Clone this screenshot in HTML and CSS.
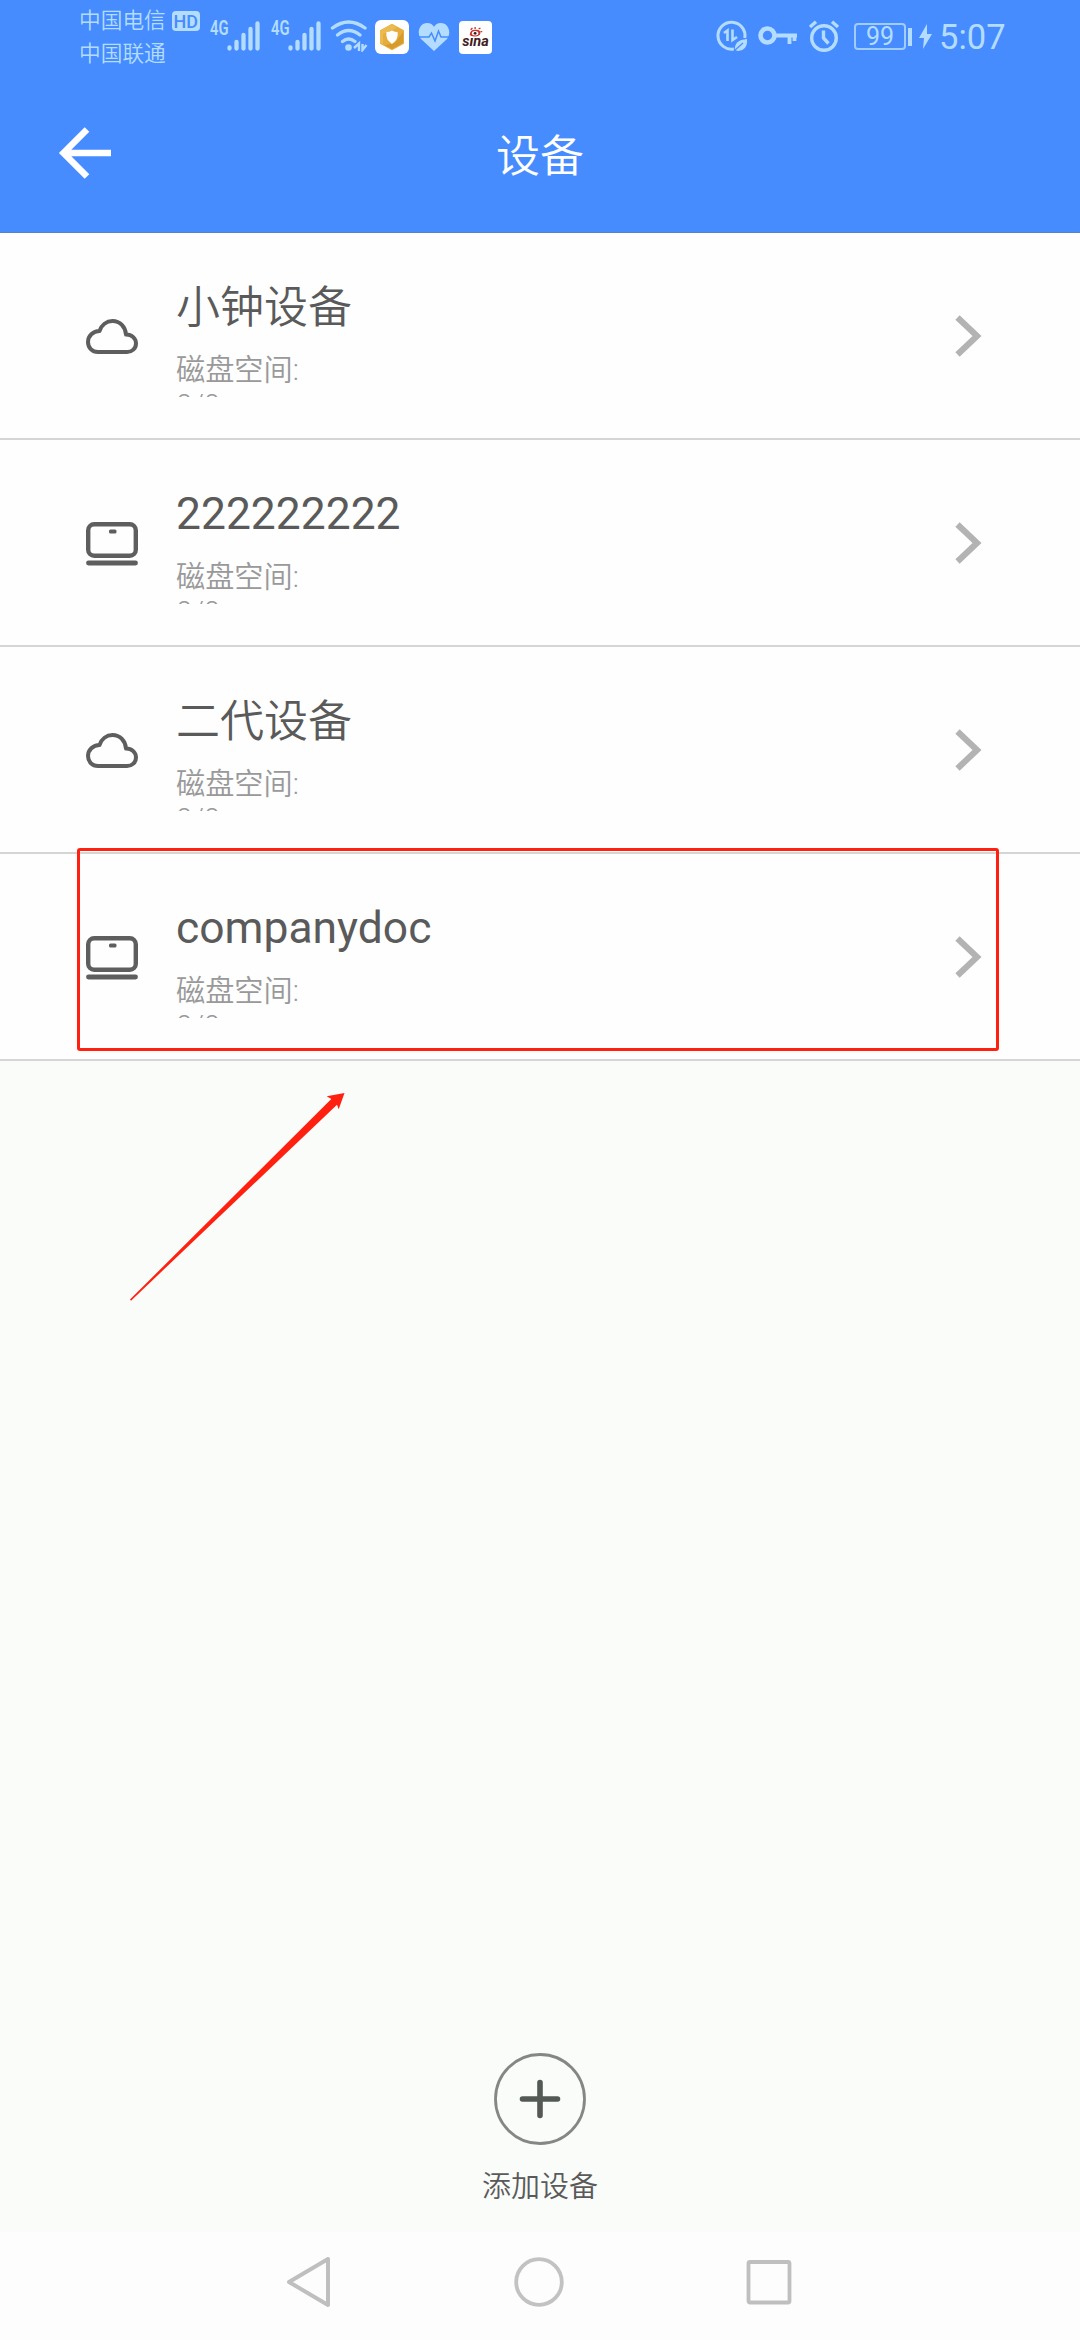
FILE: index.html
```html
<!DOCTYPE html>
<html lang="zh-CN">
<head>
<meta charset="utf-8">
<title>设备</title>
<link rel="stylesheet" href="styles.css">
</head>
<body>
<svg class="defs" width="0" height="0" aria-hidden="true">
  <symbol id="cloud" viewBox="0 0 52 36"><path d="M12 33C6 33 2 28.500 2 23C2 17 7 12 13.500 12C15.500 6 20.500 2 26.500 2C34 2 39.500 8 40 15.500C46 15.500 50 19.500 50 24.500C50 29.500 46 33 41 33Z" fill="none" stroke="#5e5e5e" stroke-width="4" stroke-linejoin="round"/></symbol>
  <symbol id="laptop" viewBox="0 0 52 44"><rect x="2.200" y="2.200" width="47.600" height="31.600" rx="6" fill="none" stroke="#5e5e5e" stroke-width="4.400"/><rect x="23" y="7.500" width="7.500" height="4" rx="1.500" fill="#5e5e5e"/><path d="M2.500 41H49.500" stroke="#5e5e5e" stroke-width="4.800" stroke-linecap="round"/></symbol>
  <symbol id="chevron" viewBox="0 0 28 44"><path d="M3.500 3.500L23 22L3.500 40.500" fill="none" stroke="#b3b3b3" stroke-width="6.200"/></symbol>
  <symbol id="signal" viewBox="0 0 34 32"><path d="M2.500 27.500V28.500M9.500 22V28.500M16.500 15V28.500M23.500 9V28.500M30.500 3.500V28.500" fill="none" stroke="#b3dcff" stroke-width="4.300" stroke-linecap="round"/></symbol>
</svg>

<header class="header">
  <div class="status">
    <div class="carriers">
      <div class="carrier">中国电信<span class="hd">HD</span></div>
      <div class="carrier">中国联通</div>
    </div>
    <div class="net"><span class="gen">4G</span><svg width="34" height="32"><use href="#signal"/></svg></div>
    <div class="net"><span class="gen">4G</span><svg width="34" height="32"><use href="#signal"/></svg></div>
    <svg class="wifi" width="38" height="32" viewBox="0 0 38 32"><g fill="none" stroke="#b3dcff" stroke-width="3.400" stroke-linecap="round"><path d="M2.500 8Q18.500 -4 35 8"/><path d="M7.500 15Q18.500 6 30 15"/><path d="M12.500 21.500Q18.500 16.500 25 21.500"/></g><circle cx="18.500" cy="27.500" r="3.300" fill="#b3dcff"/><path d="M24 28L29 23.500V31M36.500 25L32.500 30V24" fill="none" stroke="#b3dcff" stroke-width="2.400"/></svg>
    <svg class="guard" width="34" height="34" viewBox="0 0 34 34"><rect width="34" height="34" rx="6" fill="#fff"/><path d="M17 5L28 11V23L17 29L6 23V11Z" fill="#e5ad3d" stroke="#e5ad3d" stroke-width="2" stroke-linejoin="round"/><path d="M5 11L17 4L22 8L8 14V24L5 23Z" fill="#ebbb50"/><path d="M28 12V23L17 29L10 25L20 23Z" fill="#d69a2d"/><path d="M17 10.500Q20 12 22.500 12Q24 19 17 24Q10 19 11.500 12Q14 12 17 10.500Z" fill="#fff"/></svg>
    <svg class="heart" width="32" height="30" viewBox="0 0 32 30"><path d="M16 29L3 17C-2 10 2 1 9 1C13 1 15 3 16 5C17 3 19 1 23 1C30 1 34 10 29 17Z" fill="#b3dcff"/><path d="M0 15H11L13.500 11L17 19L20.500 9L23 15H32" fill="none" stroke="#468cff" stroke-width="1.500"/></svg>
    <div class="sina"><svg width="16" height="10" viewBox="0 0 18 11"><path d="M2 9Q2 3 8 3Q14 2 14 7Q13 11 7 10.500Q3 10.500 2 9Z" fill="#c8322a"/><ellipse cx="8" cy="7" rx="3.600" ry="2.500" fill="#fff"/><circle cx="8" cy="7" r="1.600" fill="#222"/><path d="M3 3L5 1M8 2V0M12 2L14 1M14 5L16 5" stroke="#c8322a" stroke-width="1.500"/></svg><span>sına</span></div>
    <svg class="data" width="32" height="32" viewBox="0 0 32 32"><path d="M18 29A13.500 13.500 0 1 1 28.800 18" fill="none" stroke="#b3dcff" stroke-width="3"/><path d="M8 13L11.500 10.500V21M16.500 9.500V20L21 17" fill="none" stroke="#b3dcff" stroke-width="2.600"/><path d="M19 30Q18 20 31 19Q32 30 22 31Z" fill="#b3dcff"/><path d="M18 31L27 23" stroke="#468cff" stroke-width="1.200"/></svg>
    <svg class="key" width="40" height="20" viewBox="0 0 40 20"><circle cx="9.500" cy="9.500" r="7" fill="none" stroke="#b3dcff" stroke-width="4.600"/><path d="M18 9.500H39M31.500 10V18M36.500 10V15" fill="none" stroke="#b3dcff" stroke-width="3.800"/></svg>
    <svg class="alarm" width="32" height="32" viewBox="0 0 32 32"><g fill="none" stroke="#b3dcff" stroke-width="3.400"><circle cx="16" cy="18" r="12.300"/><path d="M15.500 10.500V18L20.500 23.500M2 7L8 1.800M24 1.800L30 7"/></g></svg>
    <div class="battery">99</div>
    <div class="nub"></div>
    <svg class="bolt" width="13" height="25" viewBox="0 0 13 25"><path d="M8 0L0 14H5L4 25L13 10H8Z" fill="#b3dcff"/></svg>
    <div class="time">5:07</div>
  </div>
  <div class="titlebar">
    <svg class="back" width="56" height="54" viewBox="0 0 56 54"><path d="M30 3.500L6.500 27L30 50.500M6.500 27H54" fill="none" stroke="#fff" stroke-width="6.500"/></svg>
    <h1 class="title">设备</h1>
  </div>
</header>

<main class="main">
  <ul class="list">
    <li class="row">
      <svg class="icon cloud" width="52" height="36"><use href="#cloud"/></svg>
      <div class="info"><div class="name">小钟设备</div><div class="space">磁盘空间:<br>0/0</div></div>
      <svg class="chev" width="28" height="44"><use href="#chevron"/></svg>
    </li>
    <li class="row">
      <svg class="icon" width="52" height="44"><use href="#laptop"/></svg>
      <div class="info"><div class="name latin">222222222</div><div class="space">磁盘空间:<br>0/0</div></div>
      <svg class="chev" width="28" height="44"><use href="#chevron"/></svg>
    </li>
    <li class="row">
      <svg class="icon cloud" width="52" height="36"><use href="#cloud"/></svg>
      <div class="info"><div class="name">二代设备</div><div class="space">磁盘空间:<br>0/0</div></div>
      <svg class="chev" width="28" height="44"><use href="#chevron"/></svg>
    </li>
    <li class="row">
      <svg class="icon" width="52" height="44"><use href="#laptop"/></svg>
      <div class="info"><div class="name latin">companydoc</div><div class="space">磁盘空间:<br>0/0</div></div>
      <svg class="chev" width="28" height="44"><use href="#chevron"/></svg>
      <div class="marker"></div>
    </li>
  </ul>
  <svg class="pointer" width="218" height="216" viewBox="0 0 218 216"><path d="M0 213.500L201.300 13L196.700 10.300L214.500 7L208.700 23.300L207 18.700L1 214.700Z" fill="#ff2010"/></svg>
  <div class="add">
    <svg width="92" height="92" viewBox="0 0 92 92"><circle cx="46" cy="46" r="44.500" fill="none" stroke="#858785" stroke-width="2.800"/><path d="M28.500 46H63.500M46 29.500V62.500" stroke="#555955" stroke-width="5.600" stroke-linecap="round"/></svg>
    <span class="addlabel">添加设备</span>
  </div>
</main>

<nav class="nav">
  <svg width="48" height="54" viewBox="0 0 48 54"><path d="M4 27L43 4V50Z" fill="none" stroke="#bfbfbf" stroke-width="4" stroke-linejoin="round"/></svg>
  <svg width="54" height="54" viewBox="0 0 54 54"><circle cx="27" cy="27" r="22.800" fill="none" stroke="#c2c2c2" stroke-width="3.800"/></svg>
  <svg width="48" height="54" viewBox="0 0 48 54"><rect x="3.500" y="7" width="41" height="40.500" rx="1.500" fill="none" stroke="#bfbfbf" stroke-width="3.800"/></svg>
</nav>
</body>
</html>
```

FILE: styles.css
```css
* { box-sizing: border-box; }
body {
  margin: 0;
  width: 1080px;
  height: 2340px;
  display: flex;
  flex-direction: column;
  background: #fafcfa;
  font-family: Roboto, "Noto Sans CJK SC", sans-serif;
  overflow: hidden;
}
svg { display: block; flex: none; }
.defs { position: absolute; }

.header { height: 233px; background: #468cff; border-bottom: 1px solid #5584cb; }
.status {
  height: 76px;
  display: flex;
  align-items: flex-start;
  padding-left: 79px;
  color: #b3dcff;
}
.carriers { width: 131px; padding-top: 4px; }
.carrier { display: flex; align-items: center; height: 33px; font-size: 21.700px; line-height: 33px; font-weight: 350; white-space: nowrap; }
.hd {
  width: 28px; height: 20px; margin-left: 6px;
  border-radius: 4px; background: #b3dcff; color: #468cff;
  font-size: 18px; line-height: 21px; font-weight: 500; text-align: center;
}
.net { display: flex; width: 61px; padding-top: 20px; }
.gen { width: 17px; font-size: 20px; line-height: 17px; font-weight: 600; transform: scaleX(.74); transform-origin: left; }
.wifi { margin: 20px 0 0 -2px; }
.guard { margin: 20px 0 0 7px; }
.heart { margin: 22px 0 0 9px; }
.sina {
  width: 33px; height: 33px; margin: 21px 0 0 9px; padding-top: 6px;
  border-radius: 4px; background: #fff; color: #40201e;
  display: flex; flex-direction: column; align-items: center;
}
.sina span { margin-top: -2px; font-size: 14.500px; line-height: 13px; font-weight: 700; font-style: italic; }
.data { margin: 20px 0 0 224px; }
.key { margin: 26px 0 0 10px; }
.alarm { margin: 20px 0 0 10px; }
.battery {
  width: 52px; height: 27px; margin: 23px 0 0 14px;
  border: 2px solid #a0ccff; border-radius: 4px;
  font-size: 25px; line-height: 24px; text-align: center;
}
.nub { width: 4px; height: 18px; margin: 28px 0 0 2px; background: #b3dcff; }
.bolt { margin: 24px 0 0 7px; }
.time { margin: 17px 0 0 7px; font-size: 34.500px; line-height: 40px; }
.titlebar { height: 156px; display: grid; grid-template-columns: 160px 1fr 160px; align-items: start; }
.back { margin: 50px 0 0 57px; }
.title { margin: 49px 0 0; color: #fff; font-size: 44px; line-height: 64px; font-weight: 350; text-align: center; }

.main { height: 1999px; display: flex; flex-direction: column; }
.list { margin: 0; padding: 0; list-style: none; background: #fefefe; }
.row {
  position: relative;
  height: 207px;
  display: flex;
  align-items: flex-start;
  padding-left: 86px;
  border-bottom: 2px solid #d4d6d4;
}
.icon { margin-top: 82px; }
.icon.cloud { margin-top: 86px; }
.info { width: 816px; padding: 43px 0 0 38px; }
.name { height: 64px; font-size: 44px; line-height: 64px; font-weight: 350; color: #5a5a5a; white-space: nowrap; }
.name.latin { font-size: 44.400px; line-height: 62px; font-weight: 400; }
.space { height: 44px; margin-top: 13px; font-size: 29.200px; line-height: 35px; color: #999; font-weight: 350; overflow: hidden; }
.chev { margin-top: 81px; }
.marker { position: absolute; left: 77px; top: -6px; width: 922px; height: 203px; border: 3px solid #ff2010; border-radius: 3px; }
.pointer { margin: 25px 0 0 130px; }
.add { margin-top: auto; height: 179px; display: flex; flex-direction: column; align-items: center; }
.addlabel { margin-top: 21px; font-size: 29px; line-height: 42px; font-weight: 350; color: #5a5a5a; }

.nav { height: 108px; display: flex; justify-content: space-between; padding: 23px 287px 0 285px; background: #fdfdfd; }
```
